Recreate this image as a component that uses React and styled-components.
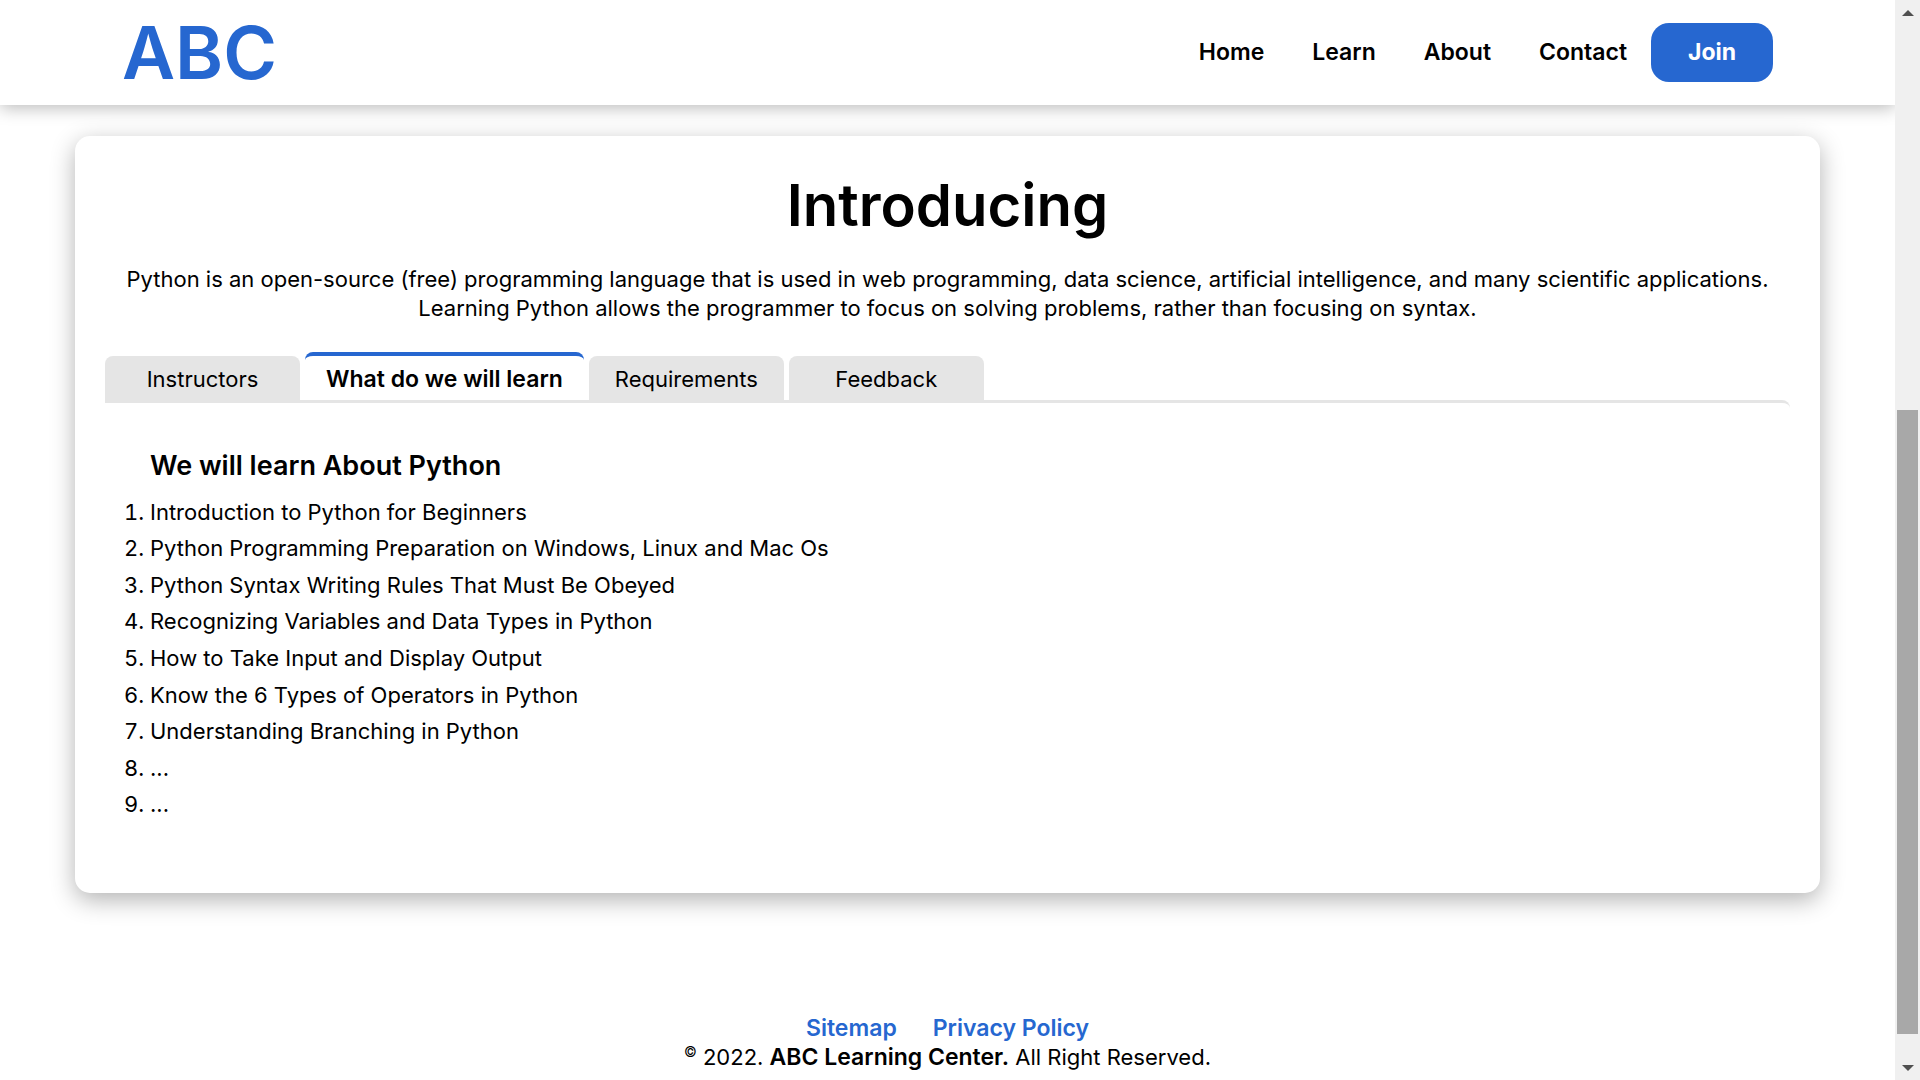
import React, { useState } from "react";
import styled, { createGlobalStyle } from "styled-components";

const blue = "#2667d0";
const grey = "#e5e5e5";

const GlobalStyle = createGlobalStyle`
  *, *::before, *::after { box-sizing: border-box; }
  body {
    margin: 0;
    background: #fff;
    color: #000;
    font-family: Inter, "Liberation Sans", sans-serif;
    font-size: 22px;
    line-height: 29px;
  }
  h1, h2, p, ol, ul { margin: 0; padding: 0; }
  button { font: inherit; color: inherit; border: 0; cursor: pointer; }
  a { color: inherit; text-decoration: none; }
`;

const Shell = styled.div`
  display: grid;
  grid-template-columns: minmax(0, 1fr) 25px;
  min-height: 100vh;
`;

const Page = styled.div`
  display: flex;
  flex-direction: column;
`;

const Header = styled.header`
  position: sticky;
  top: 0;
  z-index: 1;
  display: flex;
  align-items: center;
  justify-content: space-between;
  height: 105px;
  padding: 0 122px;
  background: #fff;
  box-shadow: 0 3px 16px rgba(0, 0, 0, 0.27);
`;

const Logo = styled.a`
  color: ${blue};
  font-size: 73px;
  line-height: 88px;
  font-weight: 600;
`;

const Nav = styled.nav`
  display: flex;
  align-items: center;
`;

const NavLink = styled.a`
  padding: 0 24px;
  font-size: 23px;
  font-weight: 600;
`;

const JoinButton = styled.button`
  min-width: 122px;
  height: 59px;
  border-radius: 18px;
  background: ${blue};
  && { color: #fff; font-size: 23px; font-weight: 700; }
`;

const Card = styled.main`
  margin: 31px 75px 0;
  padding: 30px;
  border-radius: 15px;
  background: #fff;
  box-shadow: 0 7px 25px rgba(0, 0, 0, 0.3);
`;

const Title = styled.h1`
  font-size: 58px;
  line-height: 78px;
  font-weight: 600;
  text-align: center;
`;

const Intro = styled.p`
  margin: 21px 0 29px;
  text-align: center;
`;

const TabList = styled.div`
  display: flex;
  align-items: flex-end;
  gap: 5px;
`;

const Tab = styled.button`
  min-width: 195px;
  height: ${(p) => (p.$active ? "48px" : "44px")};
  padding: 2px 21px 0;
  border-top: ${(p) => (p.$active ? `4px solid ${blue}` : "0")};
  border-radius: 8px 8px 0 0;
  background: ${(p) => (p.$active ? "#fff" : grey)};
  && {
    font-size: ${(p) => (p.$active ? "23px" : "22px")};
    font-weight: ${(p) => (p.$active ? 600 : 400)};
  }
`;

const Panel = styled.section`
  padding: 45px 0 40px 45px;
  border-top: 3px solid ${grey};
  border-radius: 0 8px 0 0;
`;

const PanelTitle = styled.h2`
  margin-bottom: 10px;
  font-size: 27px;
  line-height: 36px;
  font-weight: 600;
`;

const Topics = styled.ol`
  display: grid;
  grid-auto-rows: 1fr;
  align-items: center;
  min-height: 329px;
`;

const Footer = styled.footer`
  margin-top: 121px;
  padding-bottom: 8px;
  text-align: center;
`;

const FooterLinks = styled.nav`
  display: flex;
  justify-content: center;
  gap: 36px;
  color: ${blue};
  font-size: 23px;
  font-weight: 600;
`;

const Strong = styled.strong`
  font-size: 23px;
  font-weight: 600;
`;

const Mark = styled.sup`
  font-size: 14px;
  line-height: 0;
`;

const Rail = styled.aside`
  position: sticky;
  top: 0;
  z-index: 2;
  display: flex;
  flex-direction: column;
  height: 100vh;
  background: #f0f0f0;
`;

const RailButton = styled.button`
  display: flex;
  align-items: center;
  justify-content: center;
  height: 25px;
  padding: 0;
  background: transparent;
`;

const Track = styled.div`
  flex: 1;
  display: grid;
  grid-template-rows: 385fr 624fr 21fr;
  padding: 0 2px;
`;

const Thumb = styled.div`
  grid-row: 2;
  background: #a8a8a8;
`;

const links = ["Home", "Learn", "About", "Contact"];
const tabs = ["Instructors", "What do we will learn", "Requirements", "Feedback"];
const topics = [
  "Introduction to Python for Beginners",
  "Python Programming Preparation on Windows, Linux and Mac Os",
  "Python Syntax Writing Rules That Must Be Obeyed",
  "Recognizing Variables and Data Types in Python",
  "How to Take Input and Display Output",
  "Know the 6 Types of Operators in Python",
  "Understanding Branching in Python",
  "...",
  "...",
];

function ScrollRail() {
  return (
    <Rail>
      <RailButton aria-label="Scroll up" onClick={() => window.scrollBy(0, -40)}>
        <svg width="12" height="6" viewBox="0 0 12 6"><path d="M0 6 6 0l6 6z" fill="#505050" /></svg>
      </RailButton>
      <Track><Thumb /></Track>
      <RailButton aria-label="Scroll down" onClick={() => window.scrollBy(0, 40)}>
        <svg width="12" height="6" viewBox="0 0 12 6"><path d="M0 0 6 6l6-6z" fill="#505050" /></svg>
      </RailButton>
    </Rail>
  );
}

export default function App() {
  const [active, setActive] = useState(1);
  return (
    <>
      <GlobalStyle />
      <Shell>
        <Page>
          <Header>
            <Logo href="#home">ABC</Logo>
            <Nav>
              {links.map((l) => (
                <NavLink key={l} href={`#${l.toLowerCase()}`}>{l}</NavLink>
              ))}
              <JoinButton>Join</JoinButton>
            </Nav>
          </Header>
          <Card>
            <Title>Introducing</Title>
            <Intro>
              Python is an open-source (free) programming language that is used in web programming, data science,
              artificial intelligence, and many scientific applications. Learning Python allows the programmer to focus
              on solving problems, rather than focusing on syntax.
            </Intro>
            <TabList role="tablist">
              {tabs.map((t, i) => (
                <Tab key={t} role="tab" aria-selected={i === active} $active={i === active} onClick={() => setActive(i)}>
                  {t}
                </Tab>
              ))}
            </TabList>
            <Panel role="tabpanel">
              <PanelTitle>We will learn About Python</PanelTitle>
              <Topics>
                {topics.map((t, i) => (
                  <li key={i}>{t}</li>
                ))}
              </Topics>
            </Panel>
          </Card>
          <Footer>
            <FooterLinks>
              <a href="#sitemap">Sitemap</a>
              <a href="#privacy">Privacy Policy</a>
            </FooterLinks>
            <p>
              <Mark>©</Mark> 2022. <Strong>ABC Learning Center.</Strong> All Right Reserved.
            </p>
          </Footer>
        </Page>
        <ScrollRail />
      </Shell>
    </>
  );
}
